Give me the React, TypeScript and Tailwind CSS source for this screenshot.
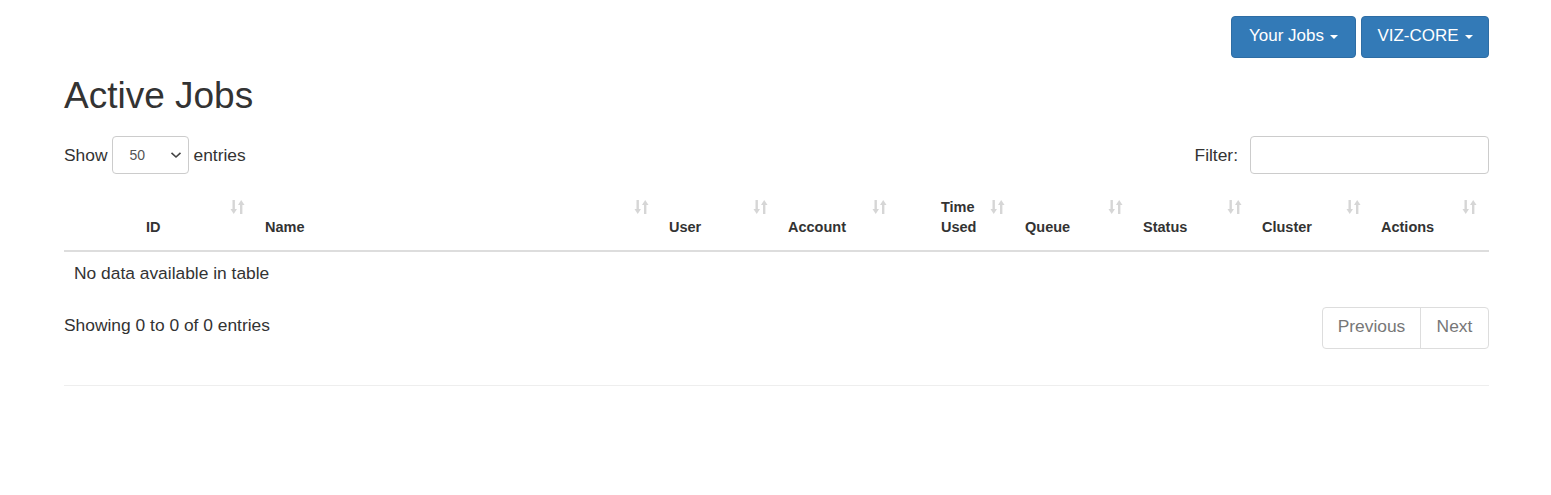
import React from 'react';

const SortIcon: React.FC = () => (
  <svg width="15" height="16" viewBox="0 0 15 16" className="absolute right-[12px] top-[11px]">
    <g fill="#d6d6d6">
      <rect x="2.5" y="1" width="2.4" height="10" />
      <polygon points="0.5,10 7,10 3.7,15" />
      <rect x="10" y="5" width="2.4" height="10" />
      <polygon points="8,6 14.5,6 11.2,1" />
    </g>
  </svg>
);

const Caret: React.FC = () => (
  <span className="ml-[6px] inline-block h-0 w-0 border-x-[4.5px] border-t-[4.5px] border-x-transparent border-t-white align-middle" />
);

const columns = [
  { label: 'ID', width: 'w-[193px]', pad: 'pl-[82px]' },
  { label: 'Name', width: 'w-[404px]', pad: 'pl-[8px]' },
  { label: 'User', width: 'w-[119px]', pad: 'pl-[8px]' },
  { label: 'Account', width: 'w-[119px]', pad: 'pl-[8px]' },
  { label: 'Time Used', width: 'w-[118px]', pad: 'pl-[42px]' },
  { label: 'Queue', width: 'w-[118px]', pad: 'pl-[8px]' },
  { label: 'Status', width: 'w-[119px]', pad: 'pl-[8px]' },
  { label: 'Cluster', width: 'w-[119px]', pad: 'pl-[8px]' },
  { label: 'Actions', width: 'w-[116px]', pad: 'pl-[8px]' },
];

const App: React.FC = () => {
  return (
    <div className="min-h-[495px] bg-white text-[#333] font-['Liberation_Sans',Arial,sans-serif] text-[17.4px]">
      <div className="ml-[64px] w-[1425px] pt-[16px]">
        <div className="flex justify-end gap-[5px]">
          <button className="h-[42px] w-[125px] rounded-[4px] border border-[#2e6da4] bg-[#337ab7] pb-[2px] text-[17px] text-white">
            Your Jobs<Caret />
          </button>
          <button className="h-[42px] w-[128px] rounded-[4px] border border-[#2e6da4] bg-[#337ab7] pb-[2px] text-[17px] text-white">
            VIZ-CORE<Caret />
          </button>
        </div>

        <h1 className="mt-[18px] text-[37px] leading-[40px] font-normal text-[#333]">Active Jobs</h1>

        <div className="mt-[20px] flex items-center justify-between">
          <div className="flex items-center">
            <span>Show</span>
            <div className="ml-[4px] mr-[5px] flex h-[38px] w-[77px] items-center justify-between rounded-[4px] border border-[#ccc] pl-[17px] pr-[6px] text-[14px] text-[#555]">
              <span>50</span>
              <svg width="12" height="8" viewBox="0 0 12 8">
                <path d="M1.5 1.8 L6 6 L10.5 1.8" fill="none" stroke="#444" strokeWidth="1.6" />
              </svg>
            </div>
            <span>entries</span>
          </div>
          <div className="flex items-center">
            <span>Filter:</span>
            <input className="ml-[12px] h-[38px] w-[239px] rounded-[4px] border border-[#ccc] outline-none" />
          </div>
        </div>

        <table className="mt-[14px] w-full table-fixed border-collapse">
          <thead>
            <tr className="border-b-2 border-[#ddd]">
              {columns.map((c) => (
                <th
                  key={c.label}
                  className={`relative ${c.width} ${c.pad} pt-[9px] pb-[13px] pr-[30px] text-left align-bottom text-[14.5px] leading-[20px] font-bold`}
                >
                  {c.label === 'Time Used' ? (
                    <span className="block w-[40px]">Time Used</span>
                  ) : (
                    c.label
                  )}
                  <SortIcon />
                </th>
              ))}
            </tr>
          </thead>
          <tbody>
            <tr>
              <td colSpan={9} className="px-[10px] pt-[9px] pb-[8px] leading-[24px]">
                No data available in table
              </td>
            </tr>
          </tbody>
        </table>

        <div className="mt-[14px] flex items-center justify-between">
          <div className="-mt-[6px]">Showing 0 to 0 of 0 entries</div>
          <div className="flex h-[42px] rounded-[4px] border border-[#ddd] text-[#777]">
            <div className="flex w-[98px] items-center justify-center border-r border-[#ddd] pb-[4px]">Previous</div>
            <div className="flex w-[67px] items-center justify-center pb-[4px]">Next</div>
          </div>
        </div>

        <div className="mt-[36px] border-t border-[#eee]" />
      </div>
    </div>
  );
};

export default App;
